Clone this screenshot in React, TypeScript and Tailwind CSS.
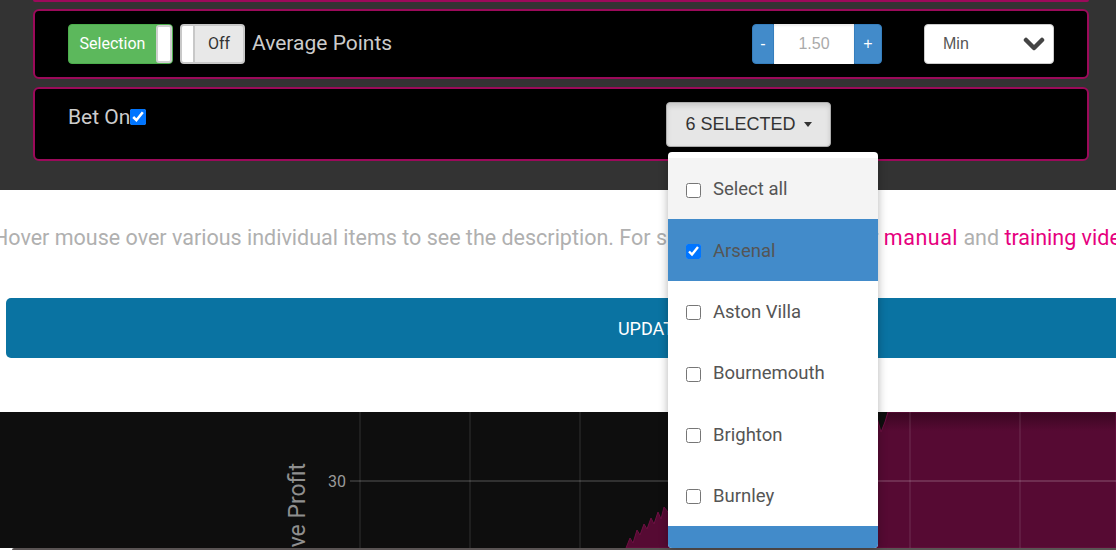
import { useState } from 'react'

const teams = [
  { name: 'Select all', checked: false, tone: 'head' },
  { name: 'Arsenal', checked: true, tone: 'active' },
  { name: 'Aston Villa', checked: false, tone: 'plain' },
  { name: 'Bournemouth', checked: false, tone: 'plain' },
  { name: 'Brighton', checked: false, tone: 'plain' },
  { name: 'Burnley', checked: false, tone: 'plain' },
  { name: 'Chelsea', checked: true, tone: 'active' },
  { name: 'Crystal Palace', checked: true, tone: 'active' },
]

const gridX = [360, 470, 580, 690, 800, 910, 1020]

const areaPoints =
  '626,136 630,126 633,131 637,118 640,123 644,112 647,117 651,106 654,112 658,100 661,107 664,95 668,100 ' +
  '700,84 740,70 780,52 820,40 860,24 876,2 881,20 885,10 888,0 1116,0 1116,136'

function ProfitChart() {
  return (
    <svg width="1116" height="136" viewBox="0 0 1116 136" className="block">
      <defs>
        <linearGradient id="fillGrad" x1="0" y1="0" x2="0" y2="136" gradientUnits="userSpaceOnUse">
          <stop offset="0" stopColor="#3a0621" />
          <stop offset="0.14" stopColor="#560a33" />
          <stop offset="1" stopColor="#560a33" />
        </linearGradient>
      </defs>
      <polygon points={areaPoints} fill="url(#fillGrad)" stroke="#6d0f42" strokeWidth="1" />
      {gridX.map((x) => (
        <line key={x} x1={x} y1="0" x2={x} y2="136" stroke="#ffffff" strokeOpacity="0.15" strokeWidth="1" />
      ))}
      <line x1="350" y1="69" x2="1116" y2="69" stroke="#ffffff" strokeOpacity="0.3" strokeWidth="1" />
      <text x="346" y="75" textAnchor="end" fontSize="16" fill="#9a9a9a" fontFamily="Roboto, sans-serif">
        30
      </text>
      <text
        transform="translate(305,51) rotate(-90)"
        textAnchor="end"
        fontSize="23"
        fill="#8f8f8f"
        fontFamily="Roboto, sans-serif"
      >
        Cumulative Profit
      </text>
    </svg>
  )
}

function TeamDropdown() {
  return (
    <div className="absolute left-[2px] top-[50px] z-10 w-[210px] h-[396px] bg-white rounded-[4px] shadow-[0_2px_10px_rgba(0,0,0,0.3)] overflow-hidden pt-[6px]">
      {teams.map((t) => (
        <div
          key={t.name}
          className={`h-[61.33px] flex items-center pl-[18px] pt-[3px] gap-[12px] text-[18.5px] text-[#555] ${
            t.tone === 'head' ? 'bg-[#f4f4f4]' : t.tone === 'active' ? 'bg-[#428bca]' : 'bg-white'
          }`}
        >
          <input type="checkbox" defaultChecked={t.checked} className="w-[15px] h-[15px] m-0" />
          <span>{t.name}</span>
        </div>
      ))}
      <div className="pointer-events-none absolute left-0 right-0 top-[420px] h-[106px] bg-gradient-to-b from-white/0 to-[#eeeeee]/60" />
    </div>
  )
}

export default function App() {
  const [open] = useState(true)

  return (
    <div className="w-[1116px] h-[550px] overflow-hidden bg-white font-['Roboto','Liberation_Sans',sans-serif]">
      {/* filter panels */}
      <section className="h-[190px] bg-[#333333] pl-[33px]">
        <div className="w-[1056px] h-[2px] bg-[#9b0a5a] rounded-b-[3px]" />

        <div className="mt-[7px] w-[1056px] h-[70px] bg-black border-2 border-[#9b0a5a] rounded-[6px] flex items-center pl-[33px] pr-[33px]">
          <div className="w-[105px] h-[40px] flex bg-[#5cb85c] border border-[#4cae4c] rounded-[4px]">
            <span className="flex-1 flex items-center justify-center text-[16px] text-white">Selection</span>
            <span className="w-[16px] h-full bg-white border-2 border-[#cfcfcf] rounded-[3px]" />
          </div>
          <div className="ml-[7px] w-[65px] h-[40px] flex bg-[#e8e8e8] border-2 border-[#c8c8c8] rounded-[4px] overflow-hidden">
            <span className="w-[13px] h-full bg-white border-r-2 border-[#c8c8c8]" />
            <span className="flex-1 flex items-center justify-center text-[16px] text-[#333]">Off</span>
          </div>
          <span className="ml-[7px] text-[21px] text-[#cccccc]">Average Points</span>

          <div className="ml-auto h-[40px] flex font-['Liberation_Sans',sans-serif] text-[16px]">
            <span className="w-[22px] flex items-center justify-center bg-[#428bca] border border-[#357ebd] rounded-l-[4px] text-white">-</span>
            <span className="w-[80px] flex items-center justify-center bg-white shadow-[inset_0_2px_2px_rgba(0,0,0,0.08)] text-[#aaaaaa]">1.50</span>
            <span className="w-[28px] flex items-center justify-center bg-[#428bca] border border-[#357ebd] rounded-r-[4px] text-white">+</span>
          </div>

          <div className="ml-[42px] w-[130px] h-[40px] flex items-center justify-between bg-white border border-[#cccccc] rounded-[4px] pl-[18px] pr-[8px] font-['Liberation_Sans',sans-serif] text-[16px] text-[#555]">
            <span>Min</span>
            <svg width="22" height="15" viewBox="0 0 22 15">
              <path d="M3 3 L11 11 L19 3" fill="none" stroke="#444" strokeWidth="4.5" strokeLinecap="round" strokeLinejoin="round" />
            </svg>
          </div>
        </div>

        <div className="mt-[8px] w-[1056px] h-[74px] bg-black border-2 border-[#9b0a5a] rounded-[6px] grid grid-cols-[598px_1fr] pl-[33px] pt-[13px]">
          <div className="flex items-start">
            <span className="text-[21px] leading-[30px] text-[#cccccc]">Bet On</span>
            <input type="checkbox" defaultChecked className="mt-[7px] w-[16px] h-[16px] m-0" />
          </div>
          <div className="relative">
            <button className="w-[165px] h-[45px] flex items-center justify-center gap-[8px] bg-[#e6e6e6] border border-[#adadad] rounded-[4px] shadow-[inset_0_3px_5px_rgba(0,0,0,0.125)] font-['Liberation_Sans',sans-serif] text-[18px] text-[#333]">
              6 SELECTED
              <span className="w-0 h-0 border-l-[4px] border-r-[4px] border-t-[5px] border-l-transparent border-r-transparent border-t-[#333]" />
            </button>
            {open && <TeamDropdown />}
          </div>
        </div>
      </section>

      {/* help text + update */}
      <section className="h-[222px] bg-white pt-[34px]">
        <p className="ml-[-7px] whitespace-nowrap text-[21.5px] leading-[28px] text-[#b0b0b0]">
          Hover mouse over various individual items to see the description. For support, please see our{' '}
          <a className="text-[#e6007e] tracking-[0.5px]">manual</a> and <a className="text-[#e6007e]">training videos</a>.
        </p>
        <button className="mt-[46px] ml-[6px] w-[1290px] h-[60px] bg-[#0a73a2] rounded-[5px] text-[18px] text-white">
          UPDATE
        </button>
      </section>

      {/* chart */}
      <section className="h-[136px] bg-[#0e0e0e]">
        <ProfitChart />
      </section>
      <div className="ml-[12px] h-[2px] bg-[#5a5454] rounded-tl-[2px]" />
    </div>
  )
}
